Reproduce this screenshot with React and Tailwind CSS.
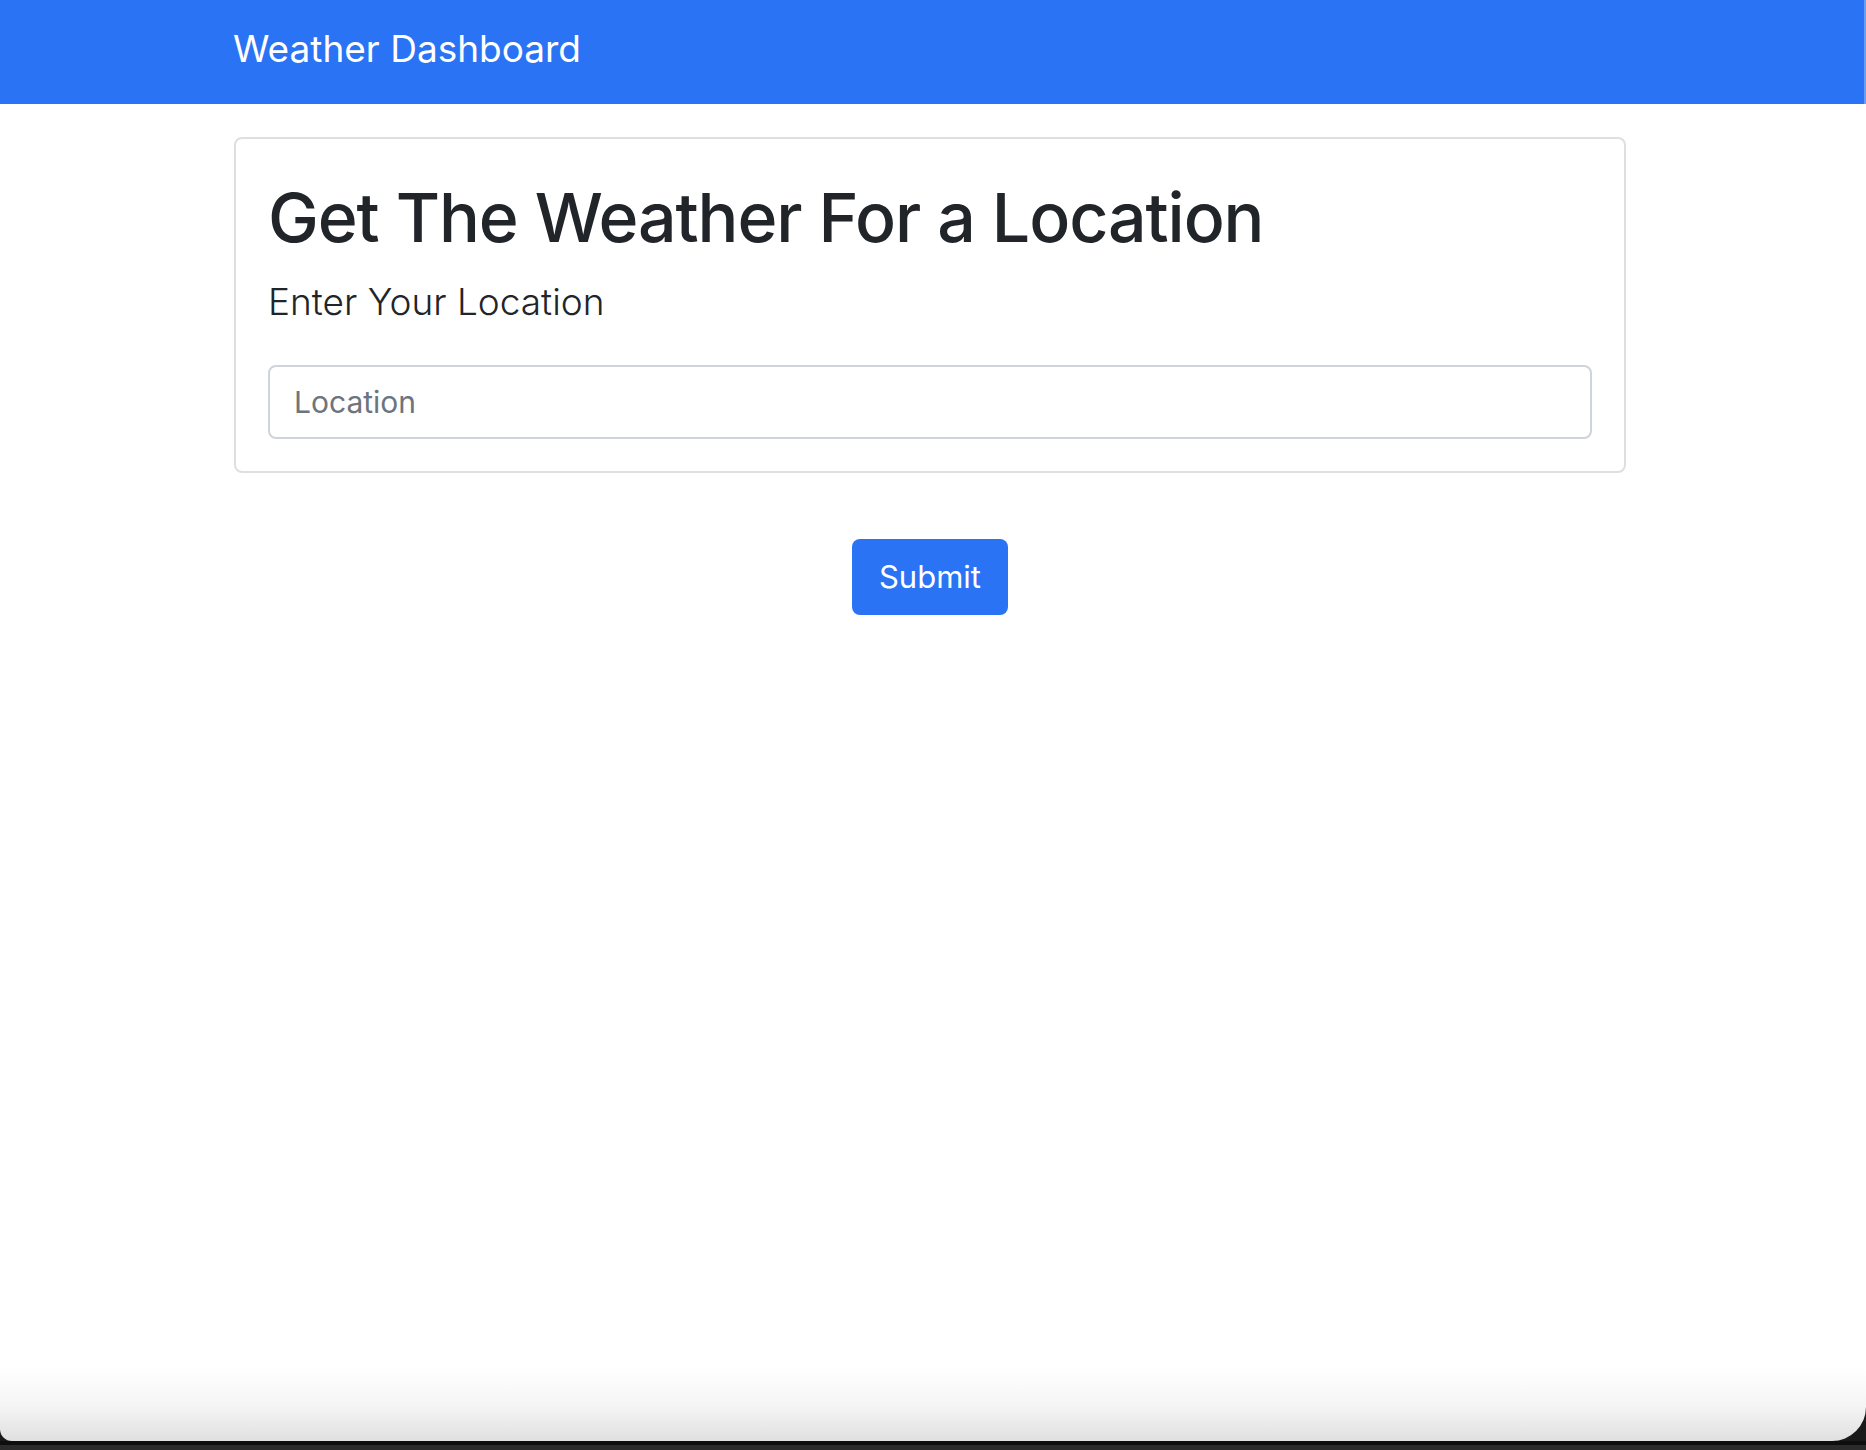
import { useState } from "react";

const sans = { fontFamily: 'Inter, "Liberation Sans", Arial, sans-serif' };

function Container({ children, className = "" }) {
  return (
    <div className="pr-[6px]">
      <div className={`mx-auto w-[1392px] ${className}`}>{children}</div>
    </div>
  );
}

function Navbar() {
  return (
    <nav className="h-[104px] w-full shrink-0 border-r-2 border-[#6b9cf5] bg-[#2a73f4]">
      <Container className="pt-[25px]">
        <a href="#" className="block text-[37px] leading-[48px] text-white">
          Weather Dashboard
        </a>
      </Container>
    </nav>
  );
}

function LocationCard({ value, onChange }) {
  return (
    <div className="rounded-[8px] border-2 border-[#dfdfdf] bg-white p-[32px]">
      <h1 className="text-[68px] font-medium leading-[92px] tracking-[-0.016em] text-[#212529]">
        Get The Weather For a Location
      </h1>
      <p className="mt-[9px] text-[37px] font-light leading-[60px] text-[#212529]">
        Enter Your Location
      </p>
      <input
        type="text"
        value={value}
        onChange={(e) => onChange(e.target.value)}
        placeholder="Location"
        className="mt-[33px] block h-[74px] w-full rounded-[8px] border-2 border-[#ced4da] bg-white px-[24px] text-[30px] text-[#212529] outline-none placeholder:text-[#6c757d]"
        style={sans}
      />
    </div>
  );
}

export default function App() {
  const [location, setLocation] = useState("");

  return (
    <div className="flex min-h-[1450px] w-full flex-col bg-[#1a1a1a]" style={sans}>
      <div className="flex flex-1 flex-col overflow-hidden rounded-bl-[12px] rounded-br-[34px] bg-[linear-gradient(to_bottom,#ffffff_0,#ffffff_1368px,#f5f5f5_1405px,#e0e0e0_100%)]">
        <Navbar />
        <Container className="pt-[33px]">
          <main>
            <LocationCard value={location} onChange={setLocation} />
            <div className="mt-[66px] flex justify-center">
              <button
                type="button"
                className="h-[76px] rounded-[8px] bg-[#2a73f4] px-[27px] text-[31px] leading-[48px] text-white"
              >
                Submit
              </button>
            </div>
          </main>
        </Container>
      </div>
      <div className="h-[4px] shrink-0 bg-[#0e0e0e]" />
      <div className="h-[5px] shrink-0 bg-[#2b2b2b]" />
    </div>
  );
}
